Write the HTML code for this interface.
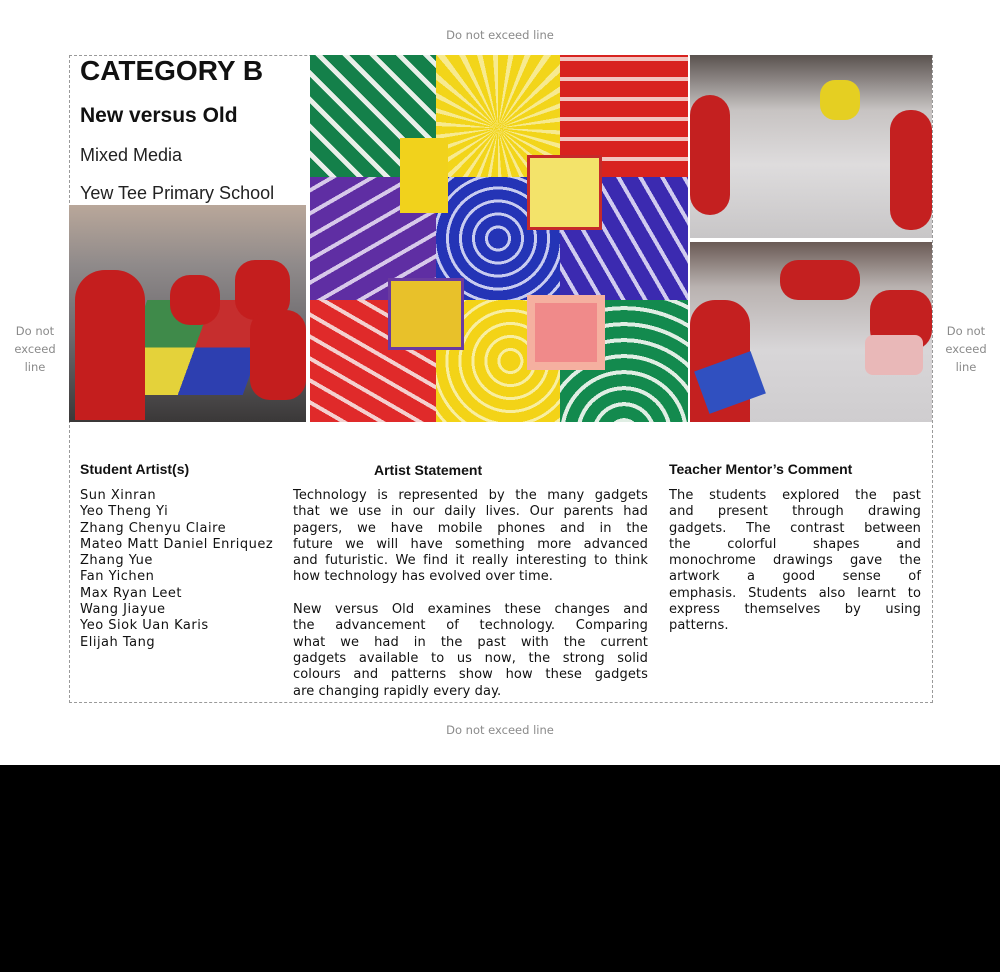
<!DOCTYPE html>
<html><head><meta charset="utf-8"><style>
*{margin:0;padding:0;box-sizing:border-box}
body{width:1000px;height:972px;background:#000;position:relative;overflow:hidden;font-family:"Liberation Sans",sans-serif}
.top{position:absolute;left:0;top:0;width:1000px;height:765px;background:#fff}
.note{position:absolute;color:#8a8a8a;text-align:center;line-height:18px;font-family:"DejaVu Sans",sans-serif;font-size:11.5px}
.box{position:absolute;left:69px;top:55px;width:864px;height:648px;border:1px dashed #9a9a9a}
.a{position:absolute}
.t{position:absolute;color:#111;font-size:13px;line-height:16.3px;font-family:"DejaVu Sans",sans-serif;letter-spacing:.1px}
.h{font-family:"Liberation Sans",sans-serif;letter-spacing:0}
.j div{text-align:justify;text-align-last:justify;white-space:nowrap;height:16.3px}
.j div.l{text-align-last:left}
</style></head><body><div class="top">
<div class="note" style="left:400px;top:26px;width:200px">Do not exceed line</div>
<div class="note" style="left:400px;top:721px;width:200px">Do not exceed line</div>
<div class="note" style="left:5px;top:322px;width:60px">Do not exceed line</div>
<div class="note" style="left:936px;top:322px;width:60px">Do not exceed line</div>
<div class="box"></div>
<div class="t h" style="left:80px;top:55px;font-size:28px;line-height:32px;font-weight:bold">CATEGORY B</div>
<div class="t h" style="left:80px;top:103px;font-size:21px;line-height:26px;font-weight:bold">New versus Old</div>
<div class="t h" style="left:80px;top:144px;font-size:18px;line-height:22px;color:#222">Mixed Media</div>
<div class="t h" style="left:80px;top:182px;font-size:18px;line-height:22px;color:#222">Yew Tee Primary School</div>
<div class="a" style="left:69px;top:205px;width:237px;height:217px;background:linear-gradient(180deg,#b9a79a 0%,#8f8a8a 28%,#6d6a6e 60%,#3a3838 100%)"></div>
<div class="a" style="left:130px;top:300px;width:130px;height:95px;background:conic-gradient(#c62e2e 0 25%,#2d3fb0 0 50%,#e4d23a 0 75%,#3f8a4a 0);transform:skewX(-20deg)"></div>
<div class="a" style="left:75px;top:270px;width:70px;height:150px;background:#c41e1e;border-radius:30px 30px 0 0"></div>
<div class="a" style="left:170px;top:275px;width:50px;height:50px;background:#c41e1e;border-radius:20px"></div>
<div class="a" style="left:235px;top:260px;width:55px;height:60px;background:#c41e1e;border-radius:20px"></div>
<div class="a" style="left:250px;top:310px;width:56px;height:90px;background:#c41e1e;border-radius:20px"></div>
<div class="a" style="left:310px;top:55px;width:378px;height:367px;display:grid;grid-template-columns:126px 124px 128px;grid-template-rows:122px 123px 122px">
<div style="background:repeating-linear-gradient(45deg,#14804a 0 14px,#e9efe9 14px 19px)"></div>
<div style="background:repeating-conic-gradient(from 0deg at 50% 60%,#f2d51a 0 8deg,#f7ea90 8deg 12deg)"></div>
<div style="background:repeating-linear-gradient(0deg,#d8231f 0 16px,#f2c5c0 16px 20px)"></div>
<div style="background:repeating-linear-gradient(-30deg,#5f2ea3 0 16px,#d7c9ea 16px 20px)"></div>
<div style="background:repeating-radial-gradient(circle at 50% 50%,#2434b6 0 10px,#c8ccf0 10px 13px)"></div>
<div style="background:repeating-linear-gradient(60deg,#3b2ab0 0 15px,#d0cbef 15px 19px)"></div>
<div style="background:repeating-linear-gradient(30deg,#e02a2a 0 15px,#f4d0cf 15px 19px)"></div>
<div style="background:repeating-radial-gradient(circle at 60% 50%,#f3d317 0 10px,#f8eea0 10px 13px)"></div>
<div style="background:repeating-radial-gradient(circle at 50% 110%,#138a4e 0 12px,#e0eee4 12px 16px)"></div>
</div>
<div class="a" style="left:400px;top:138px;width:48px;height:75px;background:#f1d21c"></div>
<div class="a" style="left:527px;top:155px;width:75px;height:75px;background:#f3e36a;border:3px solid #c52a2a"></div>
<div class="a" style="left:388px;top:278px;width:76px;height:72px;background:#e8c12a;border:3px solid #6a3aa0"></div>
<div class="a" style="left:527px;top:295px;width:78px;height:75px;background:#f08a8a;border:8px solid #f5b0a0"></div>
<div class="a" style="left:690px;top:55px;width:242px;height:183px;background:linear-gradient(180deg,#5a524f 0%,#c7c3c2 30%,#dedcdd 60%,#c8c6c7 100%)"></div>
<div class="a" style="left:690px;top:95px;width:40px;height:120px;background:#c42020;border-radius:20px"></div>
<div class="a" style="left:890px;top:110px;width:42px;height:120px;background:#c42020;border-radius:20px"></div>
<div class="a" style="left:820px;top:80px;width:40px;height:40px;background:#e5cf22;border-radius:15px"></div>
<div class="a" style="left:690px;top:242px;width:242px;height:180px;background:linear-gradient(180deg,#6a5a55 0%,#b9b2b0 25%,#d8d6d8 60%,#cfcdcf 100%)"></div>
<div class="a" style="left:690px;top:300px;width:60px;height:122px;background:#c42020;border-radius:25px 25px 0 0"></div>
<div class="a" style="left:870px;top:290px;width:62px;height:60px;background:#c42020;border-radius:20px"></div>
<div class="a" style="left:780px;top:260px;width:80px;height:40px;background:#c42020;border-radius:18px"></div>
<div class="a" style="left:700px;top:360px;width:60px;height:45px;background:#3050c0;transform:rotate(-20deg)"></div>
<div class="a" style="left:865px;top:335px;width:58px;height:40px;background:#e9b8b8;border-radius:8px"></div>
<div class="t h" style="left:80px;top:461px;font-weight:bold;font-size:14px">Student Artist(s)</div>
<div class="t h" style="left:374px;top:462px;font-weight:bold;font-size:14px">Artist Statement</div>
<div class="t h" style="left:669px;top:461px;font-weight:bold;font-size:14px">Teacher Mentor’s Comment</div>
<div class="t" style="left:80px;top:488px;width:215px;white-space:nowrap;letter-spacing:.5px">Sun Xinran<br>Yeo Theng Yi<br>Zhang Chenyu Claire<br>Mateo Matt Daniel Enriquez<br>Zhang Yue<br>Fan Yichen<br>Max Ryan Leet<br>Wang Jiayue<br>Yeo Siok Uan Karis<br>Elijah Tang</div>
<div class="t j" style="left:293px;top:488px;width:355px">
<div>Technology is represented by the many gadgets</div>
<div>that we use in our daily lives. Our parents had</div>
<div>pagers, we have mobile phones and in the</div>
<div>future we will have something more advanced</div>
<div>and futuristic. We find it really interesting to think</div>
<div class="l">how technology has evolved over time.</div>
<div class="l"></div>
<div>New versus Old examines these changes and</div>
<div>the advancement of technology. Comparing</div>
<div>what we had in the past with the current</div>
<div>gadgets available to us now, the strong solid</div>
<div>colours and patterns show how these gadgets</div>
<div class="l">are changing rapidly every day.</div>
</div>
<div class="t j" style="left:669px;top:488px;width:252px">
<div>The students explored the past</div>
<div>and present through drawing</div>
<div>gadgets. The contrast between</div>
<div>the colorful shapes and</div>
<div>monochrome drawings gave the</div>
<div>artwork a good sense of</div>
<div>emphasis. Students also learnt to</div>
<div>express themselves by using</div>
<div class="l">patterns.</div>
</div>
</div></body></html>
